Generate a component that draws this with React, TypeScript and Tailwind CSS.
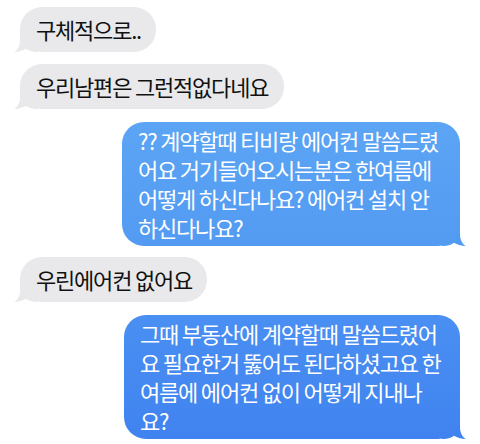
import React from "react";

const font = { fontFamily: '"Noto Sans CJK KR", "Noto Sans", sans-serif' };

const Tail = ({ color, side }: { color: string; side: "left" | "right" }) => (
    <svg
        width="24"
        height="24"
        viewBox="0 0 24 24"
        className={
            side === "left"
                ? "absolute bottom-0 left-[-6px]"
                : "absolute bottom-0 right-[-6px] -scale-x-100"
        }
    >
        <path
            d="M6 0 L6 12 C6 18 3.5 22 0 24 C5 24 9 22.8 12 20.8 C14.5 22.8 18 24 24 24 L24 0 Z"
            fill={color}
        />
    </svg>
);

const Received = ({ text, width, className }: { text: string; width: string; className: string }) => (
    <div className={`relative self-start ml-5 ${width} ${className}`}>
        <Tail color="#e9e9eb" side="left" />
        <div className="relative rounded-[22px] bg-[#e9e9eb] px-4 py-2 text-[22px] leading-[29px] tracking-[-1.2px] text-[#111] whitespace-nowrap">
            {text}
        </div>
    </div>
);

const Sent = ({
    lines,
    width,
    bg,
    tail,
    className,
}: {
    lines: string[];
    width: string;
    bg: string;
    tail: string;
    className: string;
}) => (
    <div className={`relative self-end mr-5 ${width} ${className}`}>
        <Tail color={tail} side="right" />
        <div className={`relative rounded-[22px] ${bg} px-4 py-1 text-[22px] leading-[29px] tracking-[-1.2px] text-white whitespace-nowrap`}>
            {lines.map((l, i) => (
                <div key={i}>{l}</div>
            ))}
        </div>
    </div>
);

export default function App() {
    return (
        <div className="w-[480px] h-[444px] bg-white overflow-hidden flex flex-col pt-[7px]" style={font}>
            <Received text="구체적으로.." width="w-[136px]" className="" />
            <Received text="우리남편은 그런적없다네요" width="w-[264px]" className="mt-[12px]" />
            <Sent
                lines={[
                    "?? 계약할때 티비랑 에어컨 말씀드렸",
                    "어요 거기들어오시는분은 한여름에",
                    "어떻게 하신다나요? 에어컨 설치 안",
                    "하신다나요?",
                ]}
                width="w-[338px]"
                bg="bg-gradient-to-b from-[#5ca4f4] to-[#539bf2]"
                tail="#539bf2"
                className="mt-[13px]"
            />
            <Received text="우린에어컨 없어요" width="w-[187px]" className="mt-[11px]" />
            <Sent
                lines={[
                    "그때 부동산에 계약할때 말씀드렸어",
                    "요 필요한거 뚫어도 된다하셨고요 한",
                    "여름에 에어컨 없이 어떻게 지내나",
                    "요?",
                ]}
                width="w-[336px]"
                bg="bg-gradient-to-b from-[#4a8ff2] to-[#4083f0]"
                tail="#4083f0"
                className="mt-[13px]"
            />
        </div>
    );
}
